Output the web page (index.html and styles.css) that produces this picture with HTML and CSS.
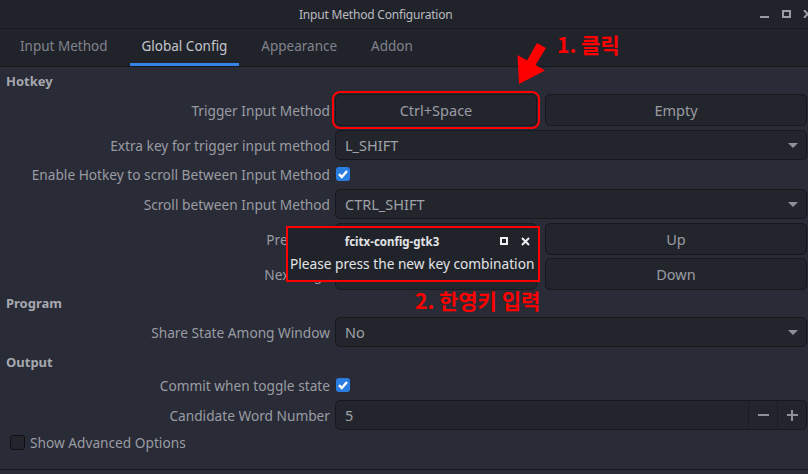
FILE: index.html
```html
<!DOCTYPE html>
<html lang="en">
<head>
    <meta charset="UTF-8">
    <title>Input Method Configuration</title>
    <link rel="stylesheet" href="styles.css">
</head>
<body>
    <div class="window">
        <header class="titlebar">
            <span class="title">Input Method Configuration</span>
            <div class="wm-buttons">
                <svg width="10" height="10" viewBox="0 0 10 10"><rect x="0" y="7" width="9" height="2" fill="#9a9ca3"/></svg>
                <svg width="9" height="8" viewBox="0 0 9 8"><rect x="1" y="1" width="7" height="6" fill="none" stroke="#9a9ca3" stroke-width="2"/></svg>
                <svg width="9" height="8" viewBox="0 0 9 8"><path d="M1 0 L8 8 M8 0 L1 8" stroke="#9a9ca3" stroke-width="2"/></svg>
            </div>
        </header>

        <nav class="tabs">
            <span class="tab">Input Method</span>
            <span class="tab active">Global Config</span>
            <span class="tab">Appearance</span>
            <span class="tab">Addon</span>
        </nav>

        <main class="content">
            <h2 class="group-title first">Hotkey</h2>
            <div class="row r-key first-row">
                <label>Trigger Input Method</label>
                <div class="keys">
                    <button class="key marked">Ctrl+Space</button>
                    <button class="key wide">Empty</button>
                </div>
            </div>
            <div class="row r-combo">
                <label>Extra key for trigger input method</label>
                <div class="combo"><span>L_SHIFT</span><i class="arrow"></i></div>
            </div>
            <div class="row r-check">
                <label>Enable Hotkey to scroll Between Input Method</label>
                <span class="check on"><svg width="14" height="14" viewBox="0 0 14 14"><path d="M3 7.2 L5.8 10 L11 4" fill="none" stroke="#fff" stroke-width="2.4"/></svg></span>
            </div>
            <div class="row r-combo">
                <label>Scroll between Input Method</label>
                <div class="combo"><span>CTRL_SHIFT</span><i class="arrow"></i></div>
            </div>
            <!-- first key of these two rows sits under the popup -->
            <div class="row r-key">
                <label>Prev Page</label>
                <div class="keys">
                    <button class="key"></button>
                    <button class="key wide">Up</button>
                </div>
            </div>
            <div class="row r-key tight">
                <label>Next Page</label>
                <div class="keys">
                    <button class="key"></button>
                    <button class="key wide">Down</button>
                </div>
            </div>

            <h2 class="group-title">Program</h2>
            <div class="row r-combo">
                <label>Share State Among Window</label>
                <div class="combo"><span>No</span><i class="arrow"></i></div>
            </div>

            <h2 class="group-title output">Output</h2>
            <div class="row r-check small">
                <label>Commit when toggle state</label>
                <span class="check on"><svg width="14" height="14" viewBox="0 0 14 14"><path d="M3 7.2 L5.8 10 L11 4" fill="none" stroke="#fff" stroke-width="2.4"/></svg></span>
            </div>
            <div class="row r-combo spin-row">
                <label>Candidate Word Number</label>
                <div class="spin">
                    <span class="spin-value">5</span>
                    <span class="spin-btn"><i class="minus"></i></span>
                    <span class="spin-btn"><i class="minus"></i><i class="plus-v"></i></span>
                </div>
            </div>

            <div class="advanced">
                <span class="check off"></span>
                <span>Show Advanced Options</span>
            </div>
            <div class="footer"></div>
        </main>

        <!-- key grab popup over the form -->
        <div class="dialog">
            <div class="dialog-head">
                <span class="dialog-title">fcitx-config-gtk3</span>
                <div class="dialog-buttons">
                    <svg width="8" height="8" viewBox="0 0 8 8"><rect x="1" y="1" width="6" height="6" fill="none" stroke="#eceef0" stroke-width="2"/></svg>
                    <svg width="9" height="9" viewBox="0 0 9 9"><path d="M1 1 L8 8 M8 1 L1 8" stroke="#eceef0" stroke-width="2"/></svg>
                </div>
            </div>
            <div class="dialog-text">Please press the new key combination</div>
        </div>

        <!-- annotations -->
        <svg class="pointer" width="45" height="50" viewBox="0 0 45 50">
            <polygon points="32,5 41,10 30.5,27 40,32.5 14,46 12.5,17 22,22.5" fill="#ff0000"/>
        </svg>
        <span class="note note-1">1. 클릭</span>
        <span class="note note-2">2. 한영키 입력</span>
    </div>
</body>
</html>
```

FILE: styles.css
```css
body {
    margin: 0;
    background: #292b36;
    font-family: "Noto Sans", "Noto Sans CJK KR", sans-serif;
}
.window {
    position: relative;
    width: 808px;
    height: 474px;
    overflow: hidden;
    background: #292b36;
    color: #9a9ca3;
}
.titlebar {
    height: 28px;
    display: flex;
    align-items: center;
    background: #21232b;
    border-bottom: 1px solid #1a1b21;
}
.title {
    margin-left: 299px;
    font-size: 12px;
    color: #b9bbc0;
    letter-spacing: -0.2px;
}
.wm-buttons {
    margin-left: auto;
    margin-right: -4px;
    display: flex;
    align-items: center;
    gap: 12px;
}
.tabs {
    height: 37px;
    display: flex;
    padding-left: 8px;
    background: #21232b;
    border-bottom: 1px solid #17181e;
}
.tab {
    padding: 0 12px;
    margin-right: 10px;
    font-size: 13.5px;
    line-height: 34px;
    color: #80838b;
    border-bottom: 3px solid transparent;
}
.tab.active {
    color: #c4c6cb;
    border-bottom-color: #3584e4;
}
.content {
    display: flex;
    flex-direction: column;
    height: 407px;
}
.group-title {
    margin: 3px 0 0;
    padding-left: 6px;
    height: 20px;
    line-height: 20px;
    font-size: 13px;
    font-weight: bold;
    color: #a6a8ae;
}
.group-title.first { margin-top: 4px; }
.group-title.output { margin-top: 5px; }
.row {
    display: grid;
    grid-template-columns: 330px 1fr;
    column-gap: 5px;
    align-items: center;
    margin-top: 4px;
    font-size: 13.7px;
}
.row.first-row, .row.tight { margin-top: 3px; }
.row label { text-align: right; white-space: nowrap; }
.r-key { height: 32px; }
.r-combo { height: 30px; }
.r-check { height: 22px; margin-top: 3px; }
.r-check.small { height: 20px; }
.spin-row { margin-top: 5px; }
.keys {
    display: flex;
    gap: 8px;
    height: 100%;
}
.key {
    width: 202px;
    height: 100%;
    padding-bottom: 2px;
    background: #23252d;
    border: 1px solid #17181e;
    border-radius: 5px;
    color: #9a9ca3;
    font-family: inherit;
    font-size: 14.5px;
}
.key.wide { flex: 1; margin-right: 1px; }
.key.marked {
    outline: 2px solid #ff0000;
    outline-offset: 1px;
}
.combo, .spin {
    height: 100%;
    box-sizing: border-box;
    display: flex;
    align-items: center;
    margin-right: 1px;
    background: #23252d;
    border: 1px solid #17181e;
    border-radius: 5px;
    color: #a0a2a8;
    font-size: 14.5px;
}
.combo { justify-content: space-between; padding: 0 8px 0 9px; }
.arrow {
    width: 0;
    height: 0;
    border-left: 5px solid transparent;
    border-right: 5px solid transparent;
    border-top: 5px solid #8f9198;
}
.check {
    width: 14px;
    height: 14px;
    box-sizing: border-box;
    border-radius: 3px;
    margin-left: 1px;
    display: flex;
}
.check.on { background: #2a7de1; }
.check.off {
    width: 15px;
    height: 15px;
    background: #23252d;
    border: 1px solid #0f1014;
}
.spin { padding-left: 9px; }
.spin-value { flex: 1; }
.spin-btn {
    position: relative;
    width: 28px;
    height: 100%;
    border-left: 1px solid #1c1d23;
    display: flex;
    align-items: center;
    justify-content: center;
}
.minus {
    width: 11px;
    height: 2px;
    background: #8f9198;
}
.plus-v {
    position: absolute;
    width: 2px;
    height: 11px;
    background: #8f9198;
}
.advanced {
    display: flex;
    align-items: center;
    gap: 5px;
    height: 20px;
    margin-top: 2px;
    padding-left: 9px;
    font-size: 13.7px;
}
.footer {
    margin-top: auto;
    height: 4px;
    border-top: 1px solid #17181e;
}
.dialog {
    position: absolute;
    left: 286px;
    top: 226px;
    width: 250px;
    height: 52px;
    background: #21232b;
    border: 2px solid #ff0000;
    color: #e2e3e6;
}
.dialog-head {
    display: flex;
    align-items: center;
    height: 26px;
}
.dialog-title {
    flex: 1;
    text-align: center;
    font-size: 11.5px;
    font-weight: bold;
}
.dialog-buttons {
    display: flex;
    align-items: center;
    gap: 13px;
    width: 38px;
    padding-left: 4px;
}
.dialog-text {
    padding-left: 2px;
    font-size: 13.7px;
    line-height: 20px;
    white-space: nowrap;
}
.pointer {
    position: absolute;
    left: 505px;
    top: 38px;
}
.note {
    position: absolute;
    color: #ff0000;
    font-family: "Noto Sans CJK KR", sans-serif;
    font-weight: bold;
    font-size: 21px;
    line-height: 24px;
}
.note-1 { left: 557px; top: 32px; }
.note-2 { left: 415px; top: 288px; }
```
